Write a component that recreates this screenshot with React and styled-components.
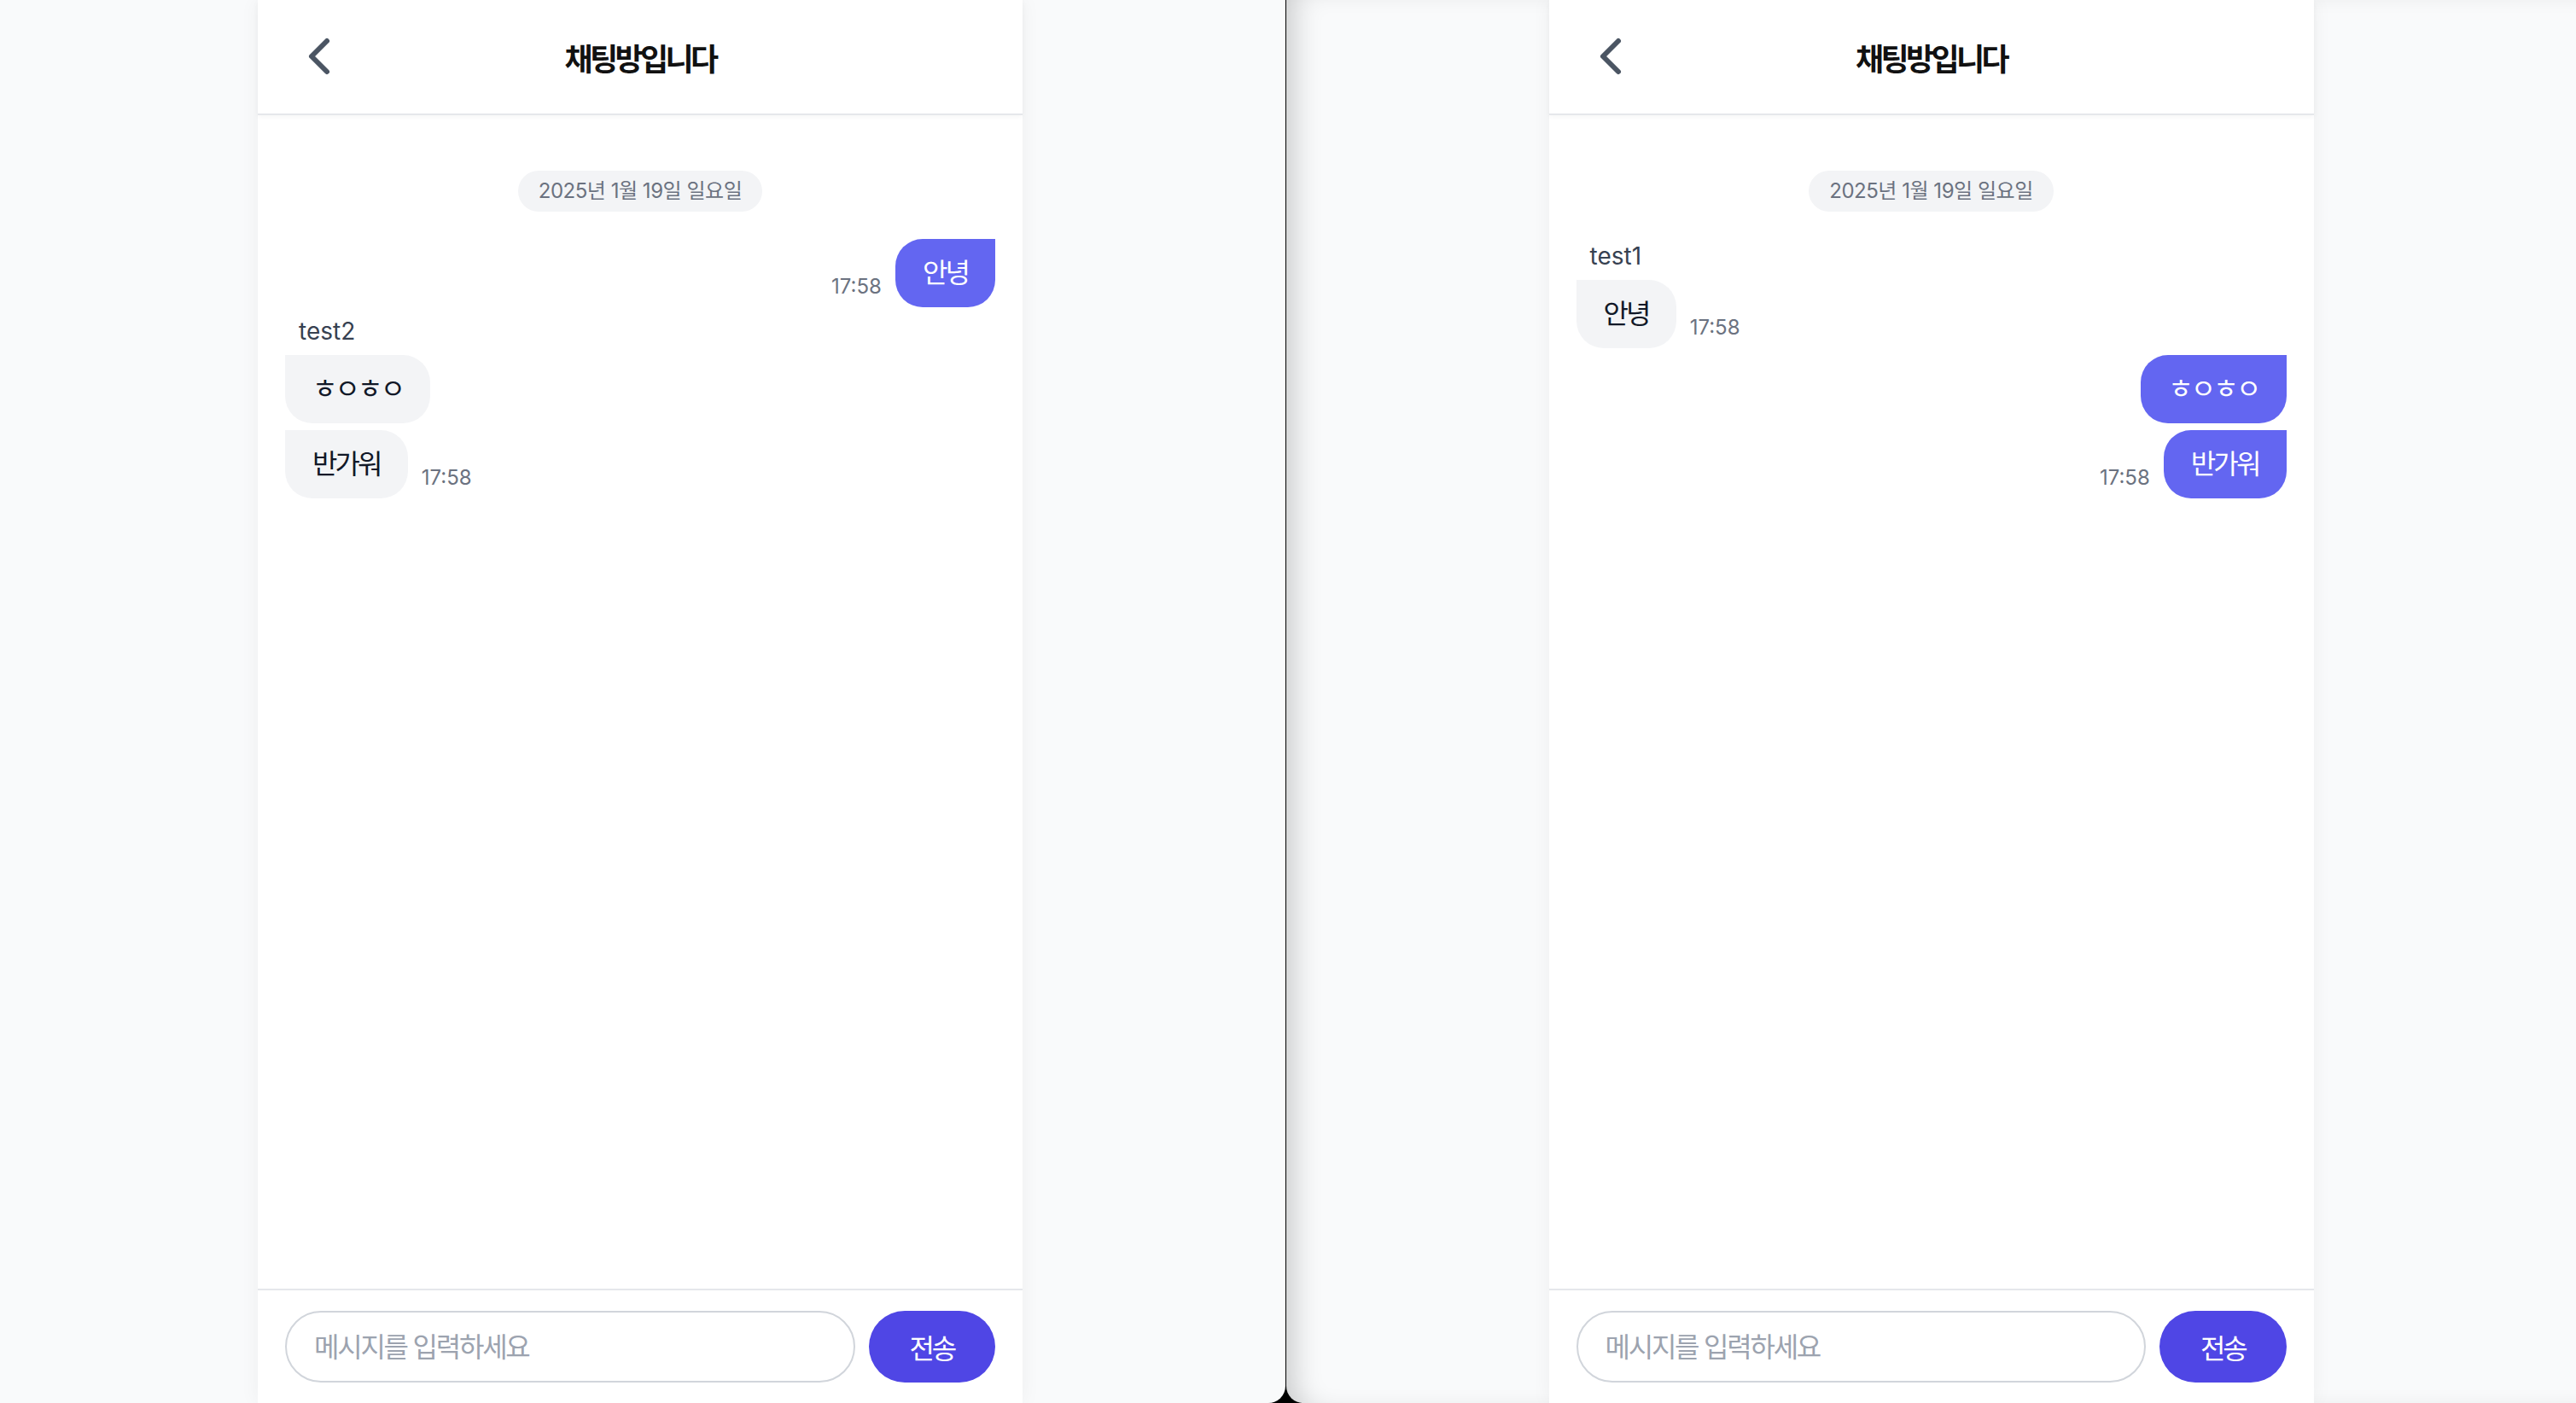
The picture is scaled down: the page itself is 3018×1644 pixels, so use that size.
import { Fragment } from "react";
import styled, { createGlobalStyle } from "styled-components";
import { ChevronLeft } from "lucide-react";

const GlobalStyle = createGlobalStyle`
  html, body {
    margin: 0;
    padding: 0;
    background: #000;
    overflow: hidden;
    font-family: Inter, "Noto Sans CJK KR", sans-serif;
  }
  * { box-sizing: border-box; }
`;

const Screen = styled.div`
  display: flex;
  gap: 1px;
  height: 100vh;
  overflow: hidden;
  background: #000;
`;

const Pane = styled.div`
  display: flex;
  justify-content: center;
  background: #f9fafb;
  ${(p) =>
    p.$side === "left"
      ? `
    width: 1506px;
    padding-right: 6px;
    border-bottom-right-radius: 20px;
  `
      : `
    flex: 1;
    border-bottom-left-radius: 20px;
    box-shadow: inset 26px 0 34px -18px rgba(0, 0, 0, 0.2);
  `}
`;

const Card = styled.div`
  width: 896px;
  height: 100%;
  display: flex;
  flex-direction: column;
  background: #fff;
  box-shadow: 0 0 22px rgba(0, 0, 0, 0.05);
`;

const Header = styled.header`
  height: 135px;
  display: grid;
  grid-template-columns: 1fr auto 1fr;
  align-items: center;
  padding: 0 36px;
  border-bottom: 2px solid #e5e7eb;
  box-shadow: 0 2px 6px rgba(0, 0, 0, 0.04);
`;

const BackButton = styled.button`
  justify-self: start;
  display: flex;
  margin-top: -2px;
  padding: 0;
  border: none;
  background: none;
  color: #4b5563;
  cursor: pointer;
`;

const Title = styled.h1`
  margin: 0;
  font-size: 36px;
  font-weight: 600;
  color: #111;
  letter-spacing: -0.1em;
`;

const Messages = styled.main`
  flex: 1;
  display: flex;
  flex-direction: column;
  gap: 8px;
  padding: 33px 32px 32px;
`;

const DatePill = styled.div`
  align-self: center;
  margin: 32px 0 24px;
  padding: 8px 24px;
  border-radius: 999px;
  background: #f3f4f6;
  color: #6b7280;
  font-size: 24px;
  line-height: 32px;
  letter-spacing: -0.02em;
`;

const Sender = styled.div`
  margin-left: 16px;
  font-size: 28px;
  line-height: 40px;
  color: #374151;
`;

const Row = styled.div`
  display: flex;
  align-items: flex-end;
  gap: 16px;
  justify-content: ${(p) => (p.$mine ? "flex-end" : "flex-start")};
`;

const Bubble = styled.div`
  padding: 16px 32px;
  border-radius: 32px;
  font-size: 32px;
  line-height: 48px;
  letter-spacing: -0.09em;
  ${(p) =>
    p.$mine
      ? `
    background: #6366f1;
    color: #fff;
    border-top-right-radius: 0;
  `
      : `
    background: #f3f4f6;
    color: #111827;
    border-top-left-radius: 0;
  `}
`;

const Time = styled.span`
  margin-bottom: 8px;
  font-size: 24px;
  line-height: 32px;
  color: #6b7280;
`;

const Footer = styled.footer`
  display: flex;
  gap: 16px;
  padding: 24px 32px;
  border-top: 2px solid #e5e7eb;
`;

const Input = styled.input`
  flex: 1;
  height: 84px;
  padding: 0 32px;
  border: 2px solid #d1d5db;
  border-radius: 999px;
  font-family: inherit;
  font-size: 32px;
  letter-spacing: -0.07em;
  color: #111827;
  outline: none;
  &::placeholder {
    color: #9ca3af;
  }
`;

const SendButton = styled.button`
  height: 84px;
  padding: 0 48px;
  border: none;
  border-radius: 999px;
  background: #4f46e5;
  color: #fff;
  font-family: inherit;
  font-size: 32px;
  letter-spacing: -0.1em;
  cursor: pointer;
`;

const chats = {
  left: [
    { mine: true, text: "안녕", time: "17:58" },
    { mine: false, sender: "test2", text: "ㅎㅇㅎㅇ" },
    { mine: false, text: "반가워", time: "17:58" },
  ],
  right: [
    { mine: false, sender: "test1", text: "안녕", time: "17:58" },
    { mine: true, text: "ㅎㅇㅎㅇ" },
    { mine: true, text: "반가워", time: "17:58" },
  ],
};

const ChatRoom = ({ messages }) => (
  <Card>
    <Header>
      <BackButton aria-label="뒤로">
        <ChevronLeft size={72} strokeWidth={2} />
      </BackButton>
      <Title>채팅방입니다</Title>
    </Header>
    <Messages>
      <DatePill>2025년 1월 19일 일요일</DatePill>
      {messages.map((m, i) => (
        <Fragment key={i}>
          {m.sender && <Sender>{m.sender}</Sender>}
          <Row $mine={m.mine}>
            {m.mine && m.time && <Time>{m.time}</Time>}
            <Bubble $mine={m.mine}>{m.text}</Bubble>
            {!m.mine && m.time && <Time>{m.time}</Time>}
          </Row>
        </Fragment>
      ))}
    </Messages>
    <Footer>
      <Input placeholder="메시지를 입력하세요" />
      <SendButton>전송</SendButton>
    </Footer>
  </Card>
);

const App = () => {
  return (
    <>
      <GlobalStyle />
      <Screen>
        <Pane $side="left">
          <ChatRoom messages={chats.left} />
        </Pane>
        <Pane $side="right">
          <ChatRoom messages={chats.right} />
        </Pane>
      </Screen>
    </>
  );
};

export default App;
